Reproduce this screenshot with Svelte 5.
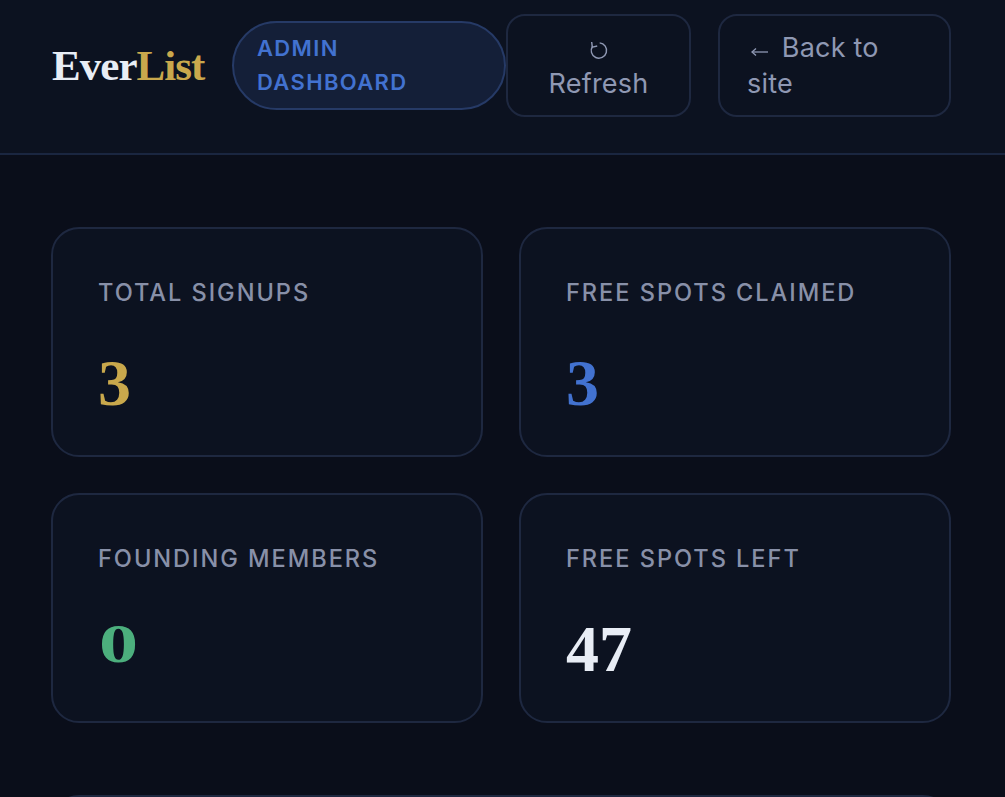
<script>
  const stats = [
    { label: 'TOTAL SIGNUPS', value: '3', tone: 'gold', fig: 'drop' },
    { label: 'FREE SPOTS CLAIMED', value: '3', tone: 'blue', fig: 'drop' },
    { label: 'FOUNDING MEMBERS', value: '0', tone: 'green', fig: 'zero' },
    { label: 'FREE SPOTS LEFT', value: '47', tone: 'white', fig: 'drop' }
  ];
</script>

<div class="page">
  <header class="top">
    <div class="logo">Ever<span>List</span></div>
    <div class="badge">ADMIN DASHBOARD</div>
    <button class="btn refresh">
      <svg class="ico-refresh" viewBox="0 0 18 18" aria-hidden="true">
        <path d="M9.6 2.6 A6.9 6.9 0 1 1 3.2 5.6" />
        <path d="M2.4 1.8 L3 6.4 L7.4 5.4" />
      </svg>
      Refresh
    </button>
    <a class="btn back" href="#top"><svg class="ico-back" viewBox="0 0 27 12" aria-hidden="true">
        <path d="M5 6 H21" />
        <path d="M9 2.6 L5 6 L9 9.4" />
      </svg> Back to site</a>
  </header>
  <main class="main">
    <section class="grid">
      {#each stats as s}
        <div class="card">
          <div class="label">{s.label}</div>
          <div class="value {s.tone}"><span class={s.fig}>{s.value}</span></div>
        </div>
      {/each}
    </section>
    <section class="panel"></section>
  </main>
</div>

<style>
  :global(body) { margin: 0; background: #0a0e1a; }
  .page {
    height: 797px;
    overflow: hidden;
    background: #0a0e1a;
    font-family: Inter, "Liberation Sans", sans-serif;
  }
  .top {
    box-sizing: border-box;
    height: 155px;
    padding: 0 54px 23px 52px;
    display: flex;
    align-items: center;
    background: #0c1220;
    border-bottom: 2px solid #1a2640;
  }
  .logo {
    width: 180px;
    flex: none;
    font-family: "Liberation Serif", serif;
    font-weight: 700;
    font-size: 43px;
    letter-spacing: -0.95px;
    color: #e8edf5;
  }
  .logo span { color: #c9a84c; }
  .badge {
    box-sizing: border-box;
    width: 274px;
    height: 89px;
    flex: none;
    padding: 8px 23px;
    border: 2px solid #263a66;
    border-radius: 45px;
    background: #141f38;
    color: #4272d0;
    font-size: 22px;
    font-weight: 600;
    line-height: 34px;
    letter-spacing: 1.35px;
  }
  .btn {
    box-sizing: border-box;
    height: 103px;
    flex: none;
    border: 2px solid #1e2840;
    border-radius: 19px;
    background: #0c1220;
    color: #8f98b3;
    font-family: inherit;
    font-size: 27px;
    font-weight: 400;
    letter-spacing: 0.2px;
    line-height: 36px;
    text-decoration: none;
  }
  .refresh {
    width: 185px;
    padding: 14px 20px;
    margin-right: 27px;
    text-align: center;
  }
  .back {
    width: 233px;
    padding: 14px 27px;
  }
  svg {
    fill: none;
    stroke: #8f98b3;
    stroke-width: 1.3;
  }
  .ico-refresh {
    display: block;
    width: 20px;
    height: 20px;
    margin: 10px auto 6px;
  }
  .ico-back {
    display: inline-block;
    width: 27px;
    height: 12px;
    vertical-align: -1px;
  }
  .main { padding: 72px 54px 0 51px; }
  .grid {
    display: grid;
    grid-template-columns: 432px 432px;
    gap: 36px;
  }
  .card {
    box-sizing: border-box;
    height: 230px;
    padding: 48px 45px;
    border: 2px solid #1e2840;
    border-radius: 28px;
    background: #0c1220;
  }
  .label {
    color: #8890a8;
    font-size: 23.6px;
    line-height: 32px;
    letter-spacing: 1.95px;
    font-weight: 500;
  }
  .value {
    margin-top: 27px;
    font-family: "Liberation Serif", serif;
    font-weight: 700;
    font-size: 66px;
    line-height: 76px;
  }
  .drop {
    display: inline-block;
    transform: translateY(9px);
  }
  .zero {
    display: inline-block;
    font-size: 55px;
    transform: scaleX(1.42);
    transform-origin: left bottom;
    margin-left: 1px;
  }
  .gold { color: #c9a84c; }
  .blue { color: #4272d0; }
  .green { color: #4caf7d; }
  .white { color: #e8edf5; }
  .panel {
    margin-top: 72px;
    height: 300px;
    border: 2px solid #1e2840;
    border-radius: 28px;
    background: #0c1220;
  }
</style>
